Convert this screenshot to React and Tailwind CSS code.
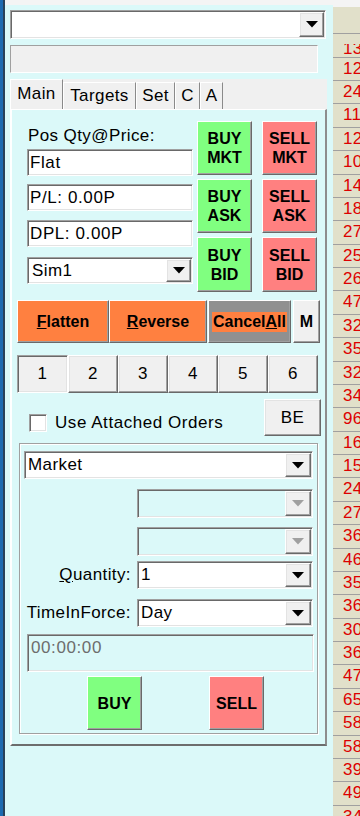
import React from 'react';

const RAISED =
  'border border-t-white border-l-white border-r-[#696969] border-b-[#696969] shadow-[inset_-1px_-1px_0_#a0a0a0,inset_1px_1px_0_#e3e3e3]';
const RAISED_FLAT =
  'border border-t-white border-l-white border-r-[#696969] border-b-[#696969] shadow-[inset_-1px_-1px_0_#a0a0a0]';
const SUNKEN =
  'border border-t-[#a0a0a0] border-l-[#a0a0a0] border-r-white border-b-white shadow-[inset_1px_1px_0_#696969,inset_-1px_-1px_0_#e3e3e3]';

const NUMS = [
  '12', '24', '11', '12', '10', '14', '18', '27', '25', '26', '47', '32', '35', '32', '34', '96',
  '16', '15', '24', '27', '36', '46', '35', '36', '30', '36', '47', '65', '58', '58', '39', '49', '34',
];

const Arrow = ({ disabled }) => (
  <svg width="12" height="7" viewBox="0 0 12 7">
    <polygon points="0,0 12,0 6,6.5" fill={disabled ? '#a0a0a0' : '#000'} />
  </svg>
);

const Dropdown = ({ value, className = '', disabled, arrowW = 'w-[26px]' }) => (
  <div className={`flex items-stretch ${SUNKEN} ${disabled ? 'bg-[#dbf9f9]' : 'bg-white'} ${className}`}>
    <div className="flex-1 flex items-center pl-[3px] whitespace-nowrap">{value}</div>
    <div className={`${arrowW} my-px mr-px flex items-center justify-center bg-[#f0f0f0] ${RAISED}`}>
      <Arrow disabled={disabled} />
    </div>
  </div>
);

const TextBox = ({ children }) => (
  <div className={`h-[27px] w-[166px] bg-white flex items-center pl-[2px] tracking-[0.6px] ${SUNKEN}`}>{children}</div>
);

const ColorBtn = ({ bg, children, className = '' }) => (
  <button
    type="button"
    className={`flex items-center justify-center text-center font-bold text-[16px] leading-[19px] tracking-normal ${RAISED_FLAT} ${bg} ${className}`}
  >
    {children}
  </button>
);

const Tab = ({ label, w, active }) => (
  <div
    className={`${w} ${active ? 'h-[30px] pt-[3.5px]' : 'h-[27px] pt-[2.5px]'} border-t border-l border-t-white border-l-white border-r border-r-[#8a8a8a] bg-[#f0f0f0] text-center leading-[20px]`}
  >
    {label}
  </div>
);

export default function App() {
  return (
    <div className="flex h-[816px] w-[360px] overflow-hidden bg-[#dbf9f9] font-['Liberation_Sans',Arial,sans-serif] text-[17px] tracking-[0.4px] text-black">
      <div className="w-[5px] shrink-0 bg-[#1d6ab0] border-r-2 border-[#28415a]" />

      <div className="w-[328px] shrink-0 flex flex-col">
        <div className="h-[5px] bg-[#f4f4f4]" />

        <Dropdown className="ml-[5px] mt-[5px] w-[316px] h-[29px]" value="" arrowW="w-[25px]" />

        <div className="ml-[5px] mt-[6px] w-[308px] h-[28px] bg-[#f0f0f0] border border-t-[#a0a0a0] border-l-[#a0a0a0] border-r-white border-b-white" />

        <div className="ml-[5px] mt-[6px] w-[317px] h-[30px] bg-[#f0f0f0] flex items-end">
          <Tab label="Main" w="w-[53px]" active />
          <Tab label="Targets" w="w-[73px]" />
          <Tab label="Set" w="w-[39px]" />
          <Tab label="C" w="w-[25px]" />
          <Tab label="A" w="w-[23px]" />
        </div>

        <div className="ml-[5px] w-[317px] h-[637px] border-l-2 border-t border-l-white border-t-white border-r-2 border-b-2 border-r-[#8d8d8d] border-b-[#6d6d6d] flex flex-col">
          {/* position / quick order buttons */}
          <div className="flex pl-[15px]">
            <div className="w-[166px] pt-[17px] flex flex-col">
              <div className="leading-[18px] pl-px whitespace-nowrap">Pos Qty@Price:</div>
              <div className="mt-[4px]"><TextBox>Flat</TextBox></div>
              <div className="mt-[8px]"><TextBox>P/L: 0.00P</TextBox></div>
              <div className="mt-[9px]"><TextBox>DPL: 0.00P</TextBox></div>
              <Dropdown className="mt-[10px] w-[166px] h-[27px]" value={<span className="pl-px">Sim1</span>} arrowW="w-[25px]" />
            </div>
            <div className="ml-[4px] pt-[11px] grid grid-cols-[55px_55px] gap-x-[10px] gap-y-[4px]">
              <ColorBtn bg="bg-[#80ff80]" className="h-[54px]">BUY<br />MKT</ColorBtn>
              <ColorBtn bg="bg-[#ff8080]" className="h-[54px]">SELL<br />MKT</ColorBtn>
              <ColorBtn bg="bg-[#80ff80]" className="h-[54px]">BUY<br />ASK</ColorBtn>
              <ColorBtn bg="bg-[#ff8080]" className="h-[54px]">SELL<br />ASK</ColorBtn>
              <ColorBtn bg="bg-[#80ff80]" className="h-[55px]">BUY<br />BID</ColorBtn>
              <ColorBtn bg="bg-[#ff8080]" className="h-[55px]">SELL<br />BID</ColorBtn>
            </div>
          </div>

          {/* flatten row */}
          <div className="mt-[8px] ml-[5px] flex h-[43px]">
            <ColorBtn bg="bg-[#ff8040]" className="w-[92px]"><span><u>F</u>latten</span></ColorBtn>
            <ColorBtn bg="bg-[#ff8040]" className="w-[98px]"><span><u>R</u>everse</span></ColorBtn>
            <ColorBtn bg="bg-[#909090]" className="ml-[1px] w-[83px]">
              <span className="bg-[#ff8040] px-px leading-[20px]">Cancel<u>A</u>ll</span>
            </ColorBtn>
            <ColorBtn bg="bg-[#f0f0f0]" className="ml-[2px] w-[27px]">M</ColorBtn>
          </div>

          {/* bracket selector */}
          <div className="mt-[12px] ml-[5px] flex h-[38px]">
            {['1', '2', '3', '4', '5', '6'].map((n, i) => (
              <div
                key={n}
                className={`${i === 0 ? 'w-[51px] ' + SUNKEN : 'w-[50px] ' + RAISED} bg-[#f0f0f0] flex items-center justify-center`}
              >
                {n}
              </div>
            ))}
          </div>

          <div className="mt-[6px] flex">
            <div className="ml-[17px] mt-[14px] flex items-center h-[20px] self-start">
              <div className={`w-[18px] h-[18px] bg-white ${SUNKEN}`} />
              <span className="ml-[8px] leading-[20px] whitespace-nowrap tracking-[0.55px]">Use Attached Orders</span>
            </div>
            <button type="button" className={`ml-auto mr-[4px] w-[57px] h-[37px] bg-[#f0f0f0] ${RAISED}`}>BE</button>
          </div>

          {/* order entry group */}
          <div className="mt-[7px] ml-[7px] w-[299px] border border-[#a0a0a0] shadow-[inset_1px_1px_0_#ffffff,1px_1px_0_#ffffff] flex flex-col pb-[3px]">
            <Dropdown className="ml-[4px] mt-[7px] w-[289px] h-[28px]" value="Market" />
            <Dropdown className="ml-[117px] mt-[10px] w-[176px] h-[29px]" value="" disabled />
            <Dropdown className="ml-[117px] mt-[9px] w-[176px] h-[29px]" value="" disabled />
            <div className="mt-[5px] flex items-center">
              <div className="w-[111px] text-right whitespace-nowrap"><u>Q</u>uantity:</div>
              <Dropdown className="ml-[6px] w-[176px] h-[28px]" value="1" />
            </div>
            <div className="mt-[10px] flex items-center">
              <div className="w-[111px] text-right whitespace-nowrap">TimeInForce:</div>
              <Dropdown className="ml-[6px] w-[176px] h-[28px]" value="Day" />
            </div>
            <div className={`ml-[7px] mt-[7px] w-[287px] h-[38px] pl-[3px] pt-[3px] leading-[20px] tracking-[0.6px] text-[#6d6d6d] ${SUNKEN}`}>
              00:00:00
            </div>
            <div className="mt-[4px] flex">
              <ColorBtn bg="bg-[#80ff80]" className="ml-[67px] w-[55px] h-[54px]">BUY</ColorBtn>
              <ColorBtn bg="bg-[#ff8080]" className="ml-[67px] w-[55px] h-[54px]">SELL</ColorBtn>
            </div>
          </div>
        </div>
      </div>

      {/* price ladder column */}
      <div className="w-[27px] shrink-0 flex flex-col bg-[#e1e0ca] overflow-hidden">
        <div className="h-[7px] shrink-0 bg-[#f4f4f4]" />
        <div className="h-[27.3px] shrink-0 border-b border-[#a0a0a0]" />
        <div className="h-[23.38px] shrink-0 border-b border-[#a0a0a0] pl-[10px]">
          <div className="mt-[9.6px] h-[12px] overflow-hidden">
            <div className="-mt-[4.4px] leading-[17px] text-[#dd0000] whitespace-nowrap">13</div>
          </div>
        </div>
        {NUMS.map((n, i) => (
          <div
            key={i}
            className="h-[23.38px] shrink-0 border-b border-[#a0a0a0] pl-[10px] leading-[22px] text-[#dd0000] whitespace-nowrap"
          >
            {n}
          </div>
        ))}
      </div>
    </div>
  );
}
